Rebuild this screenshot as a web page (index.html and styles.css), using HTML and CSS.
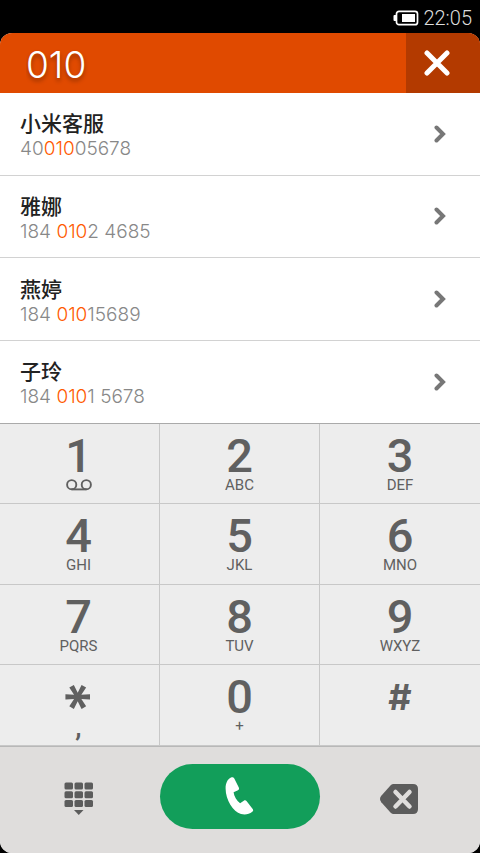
FILE: index.html
```html
<!DOCTYPE html>
<html lang="zh-CN">
<head>
<meta charset="utf-8">
<meta name="viewport" content="width=device-width, initial-scale=1">
<title>拨号</title>
<link rel="stylesheet" href="styles.css">
</head>
<body>
<div class="phone">
  <div class="status">
    <svg class="battery" width="26" height="16" viewBox="0 0 26 16" aria-hidden="true">
      <path d="M3 5H1.500Q.5 5 .5 6v4q0 1 1 1H3z" fill="#fff"/>
      <rect x="3.500" y="1.300" width="21" height="13.400" rx="2.500" fill="none" stroke="#fff" stroke-width="1.700"/>
      <path d="M9 4h13v8H9z" fill="#fff"/>
    </svg>
    <time>22:05</time>
  </div>
  <main class="dialer">
    <header class="search">
      <input class="query" type="tel" value="010" aria-label="号码">
      <button class="clear" type="button" aria-label="关闭">
        <svg width="26" height="26" viewBox="0 0 26 26"><path d="M3 3l20 20M23 3L3 23" stroke="#fff" stroke-width="5" stroke-linecap="round"/></svg>
      </button>
    </header>
    <nav class="results">
      <a class="contact" href="#c1">
        <span class="who"><span class="name">小米客服</span><span class="number">40<em>010</em>05678</span></span>
        <svg class="chevron" width="12" height="18" viewBox="0 0 12 18"><path d="M2.500 2.500L9 9l-6.500 6.500"/></svg>
      </a>
      <a class="contact" href="#c2">
        <span class="who"><span class="name">雅娜</span><span class="number">184 <em>010</em>2 4685</span></span>
        <svg class="chevron" width="12" height="18" viewBox="0 0 12 18"><path d="M2.500 2.500L9 9l-6.500 6.500"/></svg>
      </a>
      <a class="contact" href="#c3">
        <span class="who"><span class="name">燕婷</span><span class="number">184 <em>010</em>15689</span></span>
        <svg class="chevron" width="12" height="18" viewBox="0 0 12 18"><path d="M2.500 2.500L9 9l-6.500 6.500"/></svg>
      </a>
      <a class="contact" href="#c4">
        <span class="who"><span class="name">子玲</span><span class="number">184 <em>010</em>1 5678</span></span>
        <svg class="chevron" width="12" height="18" viewBox="0 0 12 18"><path d="M2.500 2.500L9 9l-6.500 6.500"/></svg>
      </a>
    </nav>
    <div class="keypad">
      <button class="key" type="button"><span class="digit">1</span><span class="letters"><svg width="26" height="12" viewBox="0 0 26 12"><g fill="none" stroke="#606060" stroke-width="1.900"><circle cx="5.700" cy="5.700" r="4.600"/><circle cx="20.300" cy="5.700" r="4.600"/><path d="M5.700 10.400h14.600"/></g></svg></span></button>
      <button class="key" type="button"><span class="digit">2</span><span class="letters">ABC</span></button>
      <button class="key" type="button"><span class="digit">3</span><span class="letters">DEF</span></button>
      <button class="key" type="button"><span class="digit">4</span><span class="letters">GHI</span></button>
      <button class="key" type="button"><span class="digit">5</span><span class="letters">JKL</span></button>
      <button class="key" type="button"><span class="digit">6</span><span class="letters">MNO</span></button>
      <button class="key" type="button"><span class="digit">7</span><span class="letters">PQRS</span></button>
      <button class="key" type="button"><span class="digit">8</span><span class="letters">TUV</span></button>
      <button class="key" type="button"><span class="digit">9</span><span class="letters">WXYZ</span></button>
      <button class="key" type="button"><span class="digit star">*</span><span class="letters comma">,</span></button>
      <button class="key" type="button"><span class="digit">0</span><span class="letters">+</span></button>
      <button class="key" type="button"><span class="digit hash">#</span></button>
    </div>
    <footer class="actions">
      <button class="action" type="button" aria-label="收起键盘">
        <svg width="30" height="34" viewBox="0 0 30 34" fill="#5c5c5c">
          <rect x="0.500" y="0.500" width="8.500" height="7" rx="1.500"/><rect x="10.500" y="0.500" width="8.500" height="7" rx="1.500"/><rect x="20.500" y="0.500" width="8.500" height="7" rx="1.500"/>
          <rect x="0.500" y="9.200" width="8.500" height="7" rx="1.500"/><rect x="10.500" y="9.200" width="8.500" height="7" rx="1.500"/><rect x="20.500" y="9.200" width="8.500" height="7" rx="1.500"/>
          <rect x="0.500" y="18" width="8.500" height="7" rx="1.500"/><rect x="10.500" y="18" width="8.500" height="7" rx="1.500"/><rect x="20.500" y="18" width="8.500" height="7" rx="1.500"/>
          <path d="M10 28h9.500l-4.750 5z"/>
        </svg>
      </button>
      <button class="call" type="button" aria-label="拨打">
        <svg width="30" height="38" viewBox="0 0 30 38"><path d="M6 .6C7.300 0 8.600.4 9.300 1.600l4.500 8.800c.6 1.300.3 2.200-.8 2.800L8.600 15.200c.4 4 3 8.300 6.500 11l3.700-2.500c1-.6 2-.5 2.700.3l6.200 8.100c.8 1.100.6 2-.4 2.700-3.200 2.500-7.300 3.300-11.300 2.200C8.200 34.700.6 23 .6 11.500.6 6.500 2.400 2.200 6 .6z" fill="#fff"/></svg>
      </button>
      <button class="action" type="button" aria-label="删除">
        <svg width="38" height="30" viewBox="0 0 38 30"><path d="M13.500 0H33q5 0 5 5v20q0 5-5 5H13.500q-1.500 0-2.800-1.300L1.300 18.200q-2.600-3.200 0-6.400L10.700 1.300Q12 0 13.500 0z" fill="#5c5c5c"/><path d="M15.500 8l14 14.500M29.500 8l-14 14.500" stroke="#dfdddc" stroke-width="4.500" stroke-linecap="round"/></svg>
      </button>
    </footer>
  </main>
</div>
</body>
</html>
```

FILE: styles.css
```css
* { box-sizing: border-box; }

body {
  margin: 0;
  background: #000;
  font-family: Roboto, "Noto Sans CJK SC", sans-serif;
}

button {
  margin: 0;
  padding: 0;
  border: 0;
  background: none;
  font: inherit;
  color: inherit;
}

svg { display: block; }

.phone {
  display: flex;
  flex-direction: column;
  min-height: 100vh;
}

.status {
  display: flex;
  justify-content: flex-end;
  align-items: center;
  gap: 4px;
  height: 33px;
  padding: 3px 8px 0 0;
  color: #ddd;
  font-size: 20px;
  font-weight: 300;
}

.dialer {
  flex: 1;
  display: flex;
  flex-direction: column;
  overflow: hidden;
  border-radius: 12px;
  background: #fff;
}

.search {
  display: flex;
  height: 60px;
  background: #e04a00;
}

.query {
  flex: 1;
  min-width: 0;
  padding: 2px 0 0 26px;
  border: 0;
  background: none;
  color: #fff;
  font: 300 37px Inter, sans-serif;
  text-shadow: 0 3px 4px rgba(0, 0, 0, 0.35);
}

.clear {
  display: flex;
  align-items: center;
  width: 74px;
  padding-left: 18px;
  background: #b33a00;
}

.results {
  flex: 330 0 0;
  display: flex;
  flex-direction: column;
}

.contact {
  flex: 1;
  display: flex;
  align-items: center;
  justify-content: space-between;
  padding: 0 34px 0 20px;
  color: #222;
  text-decoration: none;
}

.contact + .contact { border-top: 1px solid #d2d2d2; }

.who {
  display: flex;
  flex-direction: column;
  padding-top: 3px;
}

.name {
  font: 500 21px/28px "Noto Sans CJK SC", sans-serif;
}

.number {
  color: #888;
  font: 300 19px/26px Inter, sans-serif;
}

.number em {
  color: #ff5a00;
  font-style: normal;
}

.chevron {
  fill: none;
  stroke: #777;
  stroke-width: 4;
  stroke-linecap: round;
}

.keypad {
  flex: 323 0 0;
  display: grid;
  grid-template-columns: repeat(3, 1fr);
  grid-auto-rows: 1fr;
  border-top: 1px solid #aaa;
  background: #ededed;
  color: #606060;
}

.key {
  display: flex;
  flex-direction: column;
  align-items: center;
  justify-content: flex-start;
  padding-top: 12px;
  border-right: 1px solid #c8c8c8;
  border-bottom: 1px solid #c8c8c8;
}

.key:nth-child(3n + 1) { padding-right: 2px; }

.key:nth-child(3n) { border-right: 0; }

.digit {
  height: 40px;
  font: 500 47px/40px Roboto, sans-serif;
}

.star {
  font: 600 60px/60px Inter, sans-serif;
  transform: rotate(90deg);
  transform-origin: 50% 20px;
}

.hash { font: 700 36px/40px Inter, sans-serif; }

.letters {
  display: flex;
  align-items: center;
  height: 18px;
  font-size: 15px;
  font-weight: 400;
}

.comma {
  font-size: 28px;
  font-weight: 500;
}

.actions {
  display: grid;
  grid-template-columns: repeat(3, 1fr);
  align-items: center;
  height: 107px;
  padding-bottom: 8px;
  border-top: 1px solid #b8b8b8;
  background: #dfdddc;
}

.action {
  display: flex;
  justify-content: center;
  padding: 6px 2px 0 0;
}

.call {
  display: flex;
  align-items: center;
  justify-content: center;
  height: 65px;
  border-radius: 33px;
  background: #129e5a;
}
```
